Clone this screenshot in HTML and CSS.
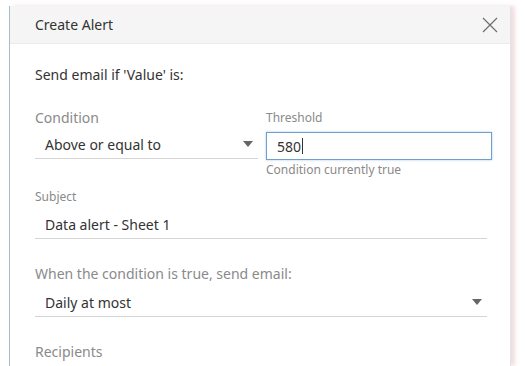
FILE: index.html
```html
<!DOCTYPE html>
<html lang="en">
<head>
  <meta charset="UTF-8">
  <title>Create Alert</title>
  <link rel="stylesheet" href="styles.css">
</head>
<body>
  <div class="dialog">
    <div class="dialog-header">
      <span class="dialog-title">Create Alert</span>
      <svg class="close" width="16" height="16" viewBox="0 0 16 16">
        <path d="M1 1 L15 15 M15 1 L1 15" stroke="#6e6e6e" stroke-width="1.2" fill="none"/>
      </svg>
    </div>
    <div class="dialog-body">
      <p class="intro">Send email if 'Value' is:</p>

      <div class="row">
        <div class="field condition">
          <div class="label">Condition</div>
          <div class="select">
            <span>Above or equal to</span>
            <span class="caret"></span>
          </div>
        </div>
        <div class="field threshold">
          <div class="label small">Threshold</div>
          <div class="input">580<span class="cursor"></span></div>
          <div class="hint">Condition currently true</div>
        </div>
      </div>

      <div class="field subject">
        <div class="label small">Subject</div>
        <div class="select">
          <span>Data alert - Sheet 1</span>
        </div>
      </div>

      <div class="field frequency">
        <div class="label">When the condition is true, send email:</div>
        <div class="select">
          <span>Daily at most</span>
          <span class="caret"></span>
        </div>
      </div>

      <div class="label recipients">Recipients</div>
    </div>
  </div>
</body>
</html>
```

FILE: styles.css
```css
body {
  margin: 0;
  background-color: #ffffff;
  font-family: "Noto Sans", "Open Sans", sans-serif;
  color: #333333;
}

.dialog {
  margin: 6px 0 0 9px;
  width: 500px;
  height: 360px;
  background-color: #ffffff;
  border-left: 1px solid #a9bccd;
  border-right: 1px solid #e4e4e4;
  box-shadow: 4px 0 4px rgba(230, 200, 205, 0.6);
  overflow: hidden;
}

.dialog-header {
  display: flex;
  align-items: center;
  justify-content: space-between;
  height: 37px;
  padding: 0 12px 0 25px;
  background-color: #f5f5f5;
  border-bottom: 1px solid #ececec;
}

.dialog-title {
  font-size: 14px;
  color: #333333;
}

.close {
  display: block;
}

.dialog-body {
  padding: 0 8px 0 25px;
}

.intro {
  margin: 21px 0 0;
  font-size: 14px;
  line-height: 20px;
  color: #333333;
}

.row {
  display: flex;
  gap: 8px;
  margin-top: 23px;
}

.label {
  font-size: 14px;
  color: #8a8a8a;
  line-height: 20px;
}

.label.small {
  font-size: 12px;
  line-height: 18px;
}

.field.condition {
  width: 223px;
  flex-shrink: 0;
}

.field.threshold {
  width: 226px;
  flex-shrink: 0;
  padding-top: 1px;
}

.select {
  box-sizing: border-box;
  display: flex;
  align-items: center;
  justify-content: space-between;
  height: 28px;
  margin-top: 3px;
  padding: 0 5px 1px 10px;
  border-bottom: 1px solid #d4d4d4;
  font-size: 14px;
  color: #333333;
}

.caret {
  width: 0;
  height: 0;
  border-left: 5px solid transparent;
  border-right: 5px solid transparent;
  border-top: 6px solid #666666;
}

.input {
  box-sizing: border-box;
  display: flex;
  align-items: center;
  height: 28px;
  margin-top: 5px;
  padding: 0 10px;
  border: 1px solid #6da0cf;
  box-shadow: 0 0 2px rgba(109, 160, 207, 0.6);
  font-size: 14px;
  color: #333333;
}

.cursor {
  display: inline-block;
  width: 1px;
  height: 16px;
  margin-left: 1px;
  background-color: #333333;
}

.hint {
  margin-top: 2px;
  font-size: 12px;
  line-height: 16px;
  color: #8a8a8a;
}

.field.subject {
  margin-top: 10px;
  width: 452px;
}

.field.subject .select {
  margin-top: 5px;
}

.field.frequency {
  margin-top: 25px;
  width: 452px;
}

.field.frequency .select {
  margin-top: 5px;
}

.recipients {
  margin-top: 25px;
}
```
